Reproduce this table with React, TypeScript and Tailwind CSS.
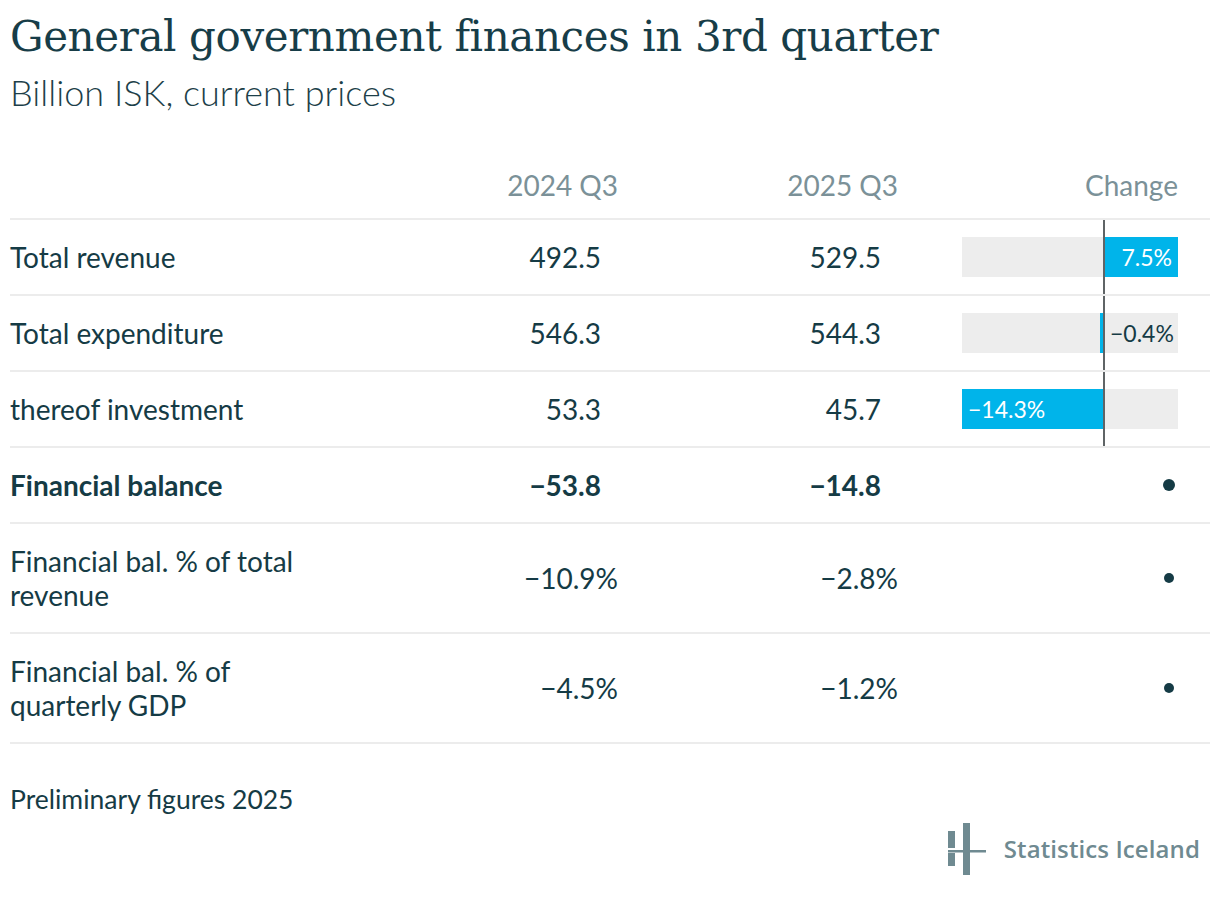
import React from "react"

const ink = "text-[#153b45]"

type Row = {
  label: string[]
  a: string
  b: string
  pct?: boolean
  bold?: boolean
  change?: number
  tall?: boolean
}

const rows: Row[] = [
  { label: ["Total revenue"], a: "492.5", b: "529.5", change: 7.5 },
  { label: ["Total expenditure"], a: "546.3", b: "544.3", change: -0.4 },
  { label: ["thereof investment"], a: "53.3", b: "45.7", change: -14.3 },
  { label: ["Financial balance"], a: "−53.8", b: "−14.8", bold: true },
  { label: ["Financial bal. % of total", "revenue"], a: "−10.9%", b: "−2.8%", pct: true, tall: true },
  { label: ["Financial bal. % of", "quarterly GDP"], a: "−4.5%", b: "−1.2%", pct: true, tall: true },
]

// scale for the change bars: zero sits 142px into a 216px track
const ZERO = 142
const PX_PER_PCT = 142 / 14.3

function ChangeBar({ value }: { value: number }) {
  const w = Math.max(Math.abs(value) * PX_PER_PCT, 4)
  const left = value >= 0 ? ZERO : ZERO - w
  const label = (value < 0 ? "−" : "") + Math.abs(value).toFixed(1) + "%"
  const wide = w > 60
  return (
    <div className="relative h-full flex items-center">
      <div className="relative w-full h-[40px] bg-[#ededed]">
        <div className="absolute top-0 h-full bg-[#00b4ea]" style={{ left, width: w }} />
        {wide ? (
          <span
            className="absolute top-0 h-full flex items-center text-white text-[23px]"
            style={value >= 0 ? { right: 6 } : { left: 6 }}
          >
            {label}
          </span>
        ) : (
          <span
            className={`absolute top-0 h-full flex items-center text-[23px] ${ink}`}
            style={{ left: ZERO + 6 }}
          >
            {label}
          </span>
        )}
      </div>
      <div className="absolute top-0 bottom-0 w-[2px] bg-[#5f6466]" style={{ left: ZERO - 1 }} />
    </div>
  )
}

function Logo() {
  return (
    <div className="flex items-center gap-[18px]">
      <svg width="38" height="52" viewBox="0 0 38 52">
        <rect x="0" y="8" width="7" height="17" fill="#6f8a91" />
        <rect x="0" y="30" width="7" height="13" fill="#6f8a91" />
        <rect x="15" y="0" width="7" height="52" fill="#6f8a91" />
        <rect x="0" y="27" width="38" height="2.5" fill="#6f8a91" />
      </svg>
      <span className="text-[24px] font-semibold text-[#6f8a91] font-['Open_Sans',sans-serif] tracking-[0.1px]">
        Statistics Iceland
      </span>
    </div>
  )
}

export default function App() {
  return (
    <div className={`w-[1220px] h-[902px] bg-white px-[10px] font-['Lato',sans-serif] ${ink}`}>
      <h1 className="pt-[12px] text-[42px] leading-[50px] text-[#173d48] font-['DejaVu_Serif',serif] tracking-[-0.4px]">
        General government finances in 3rd quarter
      </h1>
      <p className="mt-[10px] text-[36px] leading-[40px] font-light text-[#1d3f49]">Billion ISK, current prices</p>

      <div className="mt-[48px]">
        <div className="grid grid-cols-[328px_280px_280px_64px_216px_32px] h-[58px] items-start text-[28px] text-[#7b9198]">
          <div />
          <div className="text-right pt-[4px]">2024 Q3</div>
          <div className="text-right pt-[4px]">2025 Q3</div>
          <div />
          <div className="text-right pt-[4px]">Change</div>
          <div />
        </div>

        {rows.map((r, i) => (
          <div
            key={i}
            className={`grid grid-cols-[328px_280px_280px_64px_216px_32px] border-t-2 border-[#ececec] text-[28px] ${
              r.tall ? (i === rows.length - 1 ? "h-[112px] border-b-2" : "h-[110px]") : "h-[76px]"
            } ${r.bold ? "font-bold" : ""}`}
          >
            <div className="flex flex-col justify-center leading-[34px]">
              {r.label.map((l) => (
                <span key={l}>{l}</span>
              ))}
            </div>
            <div className={`flex items-center justify-end ${r.pct ? "" : "pr-[17px]"}`}>{r.a}</div>
            <div className={`flex items-center justify-end ${r.pct ? "" : "pr-[17px]"}`}>{r.b}</div>
            <div />
            <div>
              {r.change !== undefined ? (
                <ChangeBar value={r.change} />
              ) : (
                <div className="h-full flex items-center justify-end pr-[3px]">
                  <div className={`rounded-full bg-[#153b45] ${r.bold ? "w-[12px] h-[12px]" : "w-[10px] h-[10px] mr-[1px]"}`} />
                </div>
              )}
            </div>
            <div />
          </div>
        ))}
      </div>

      <p className="mt-[38px] text-[26.5px] leading-[34px]">Preliminary figures 2025</p>

      <div className="flex justify-end mt-[7px] pr-[10px]">
        <Logo />
      </div>
    </div>
  )
}
